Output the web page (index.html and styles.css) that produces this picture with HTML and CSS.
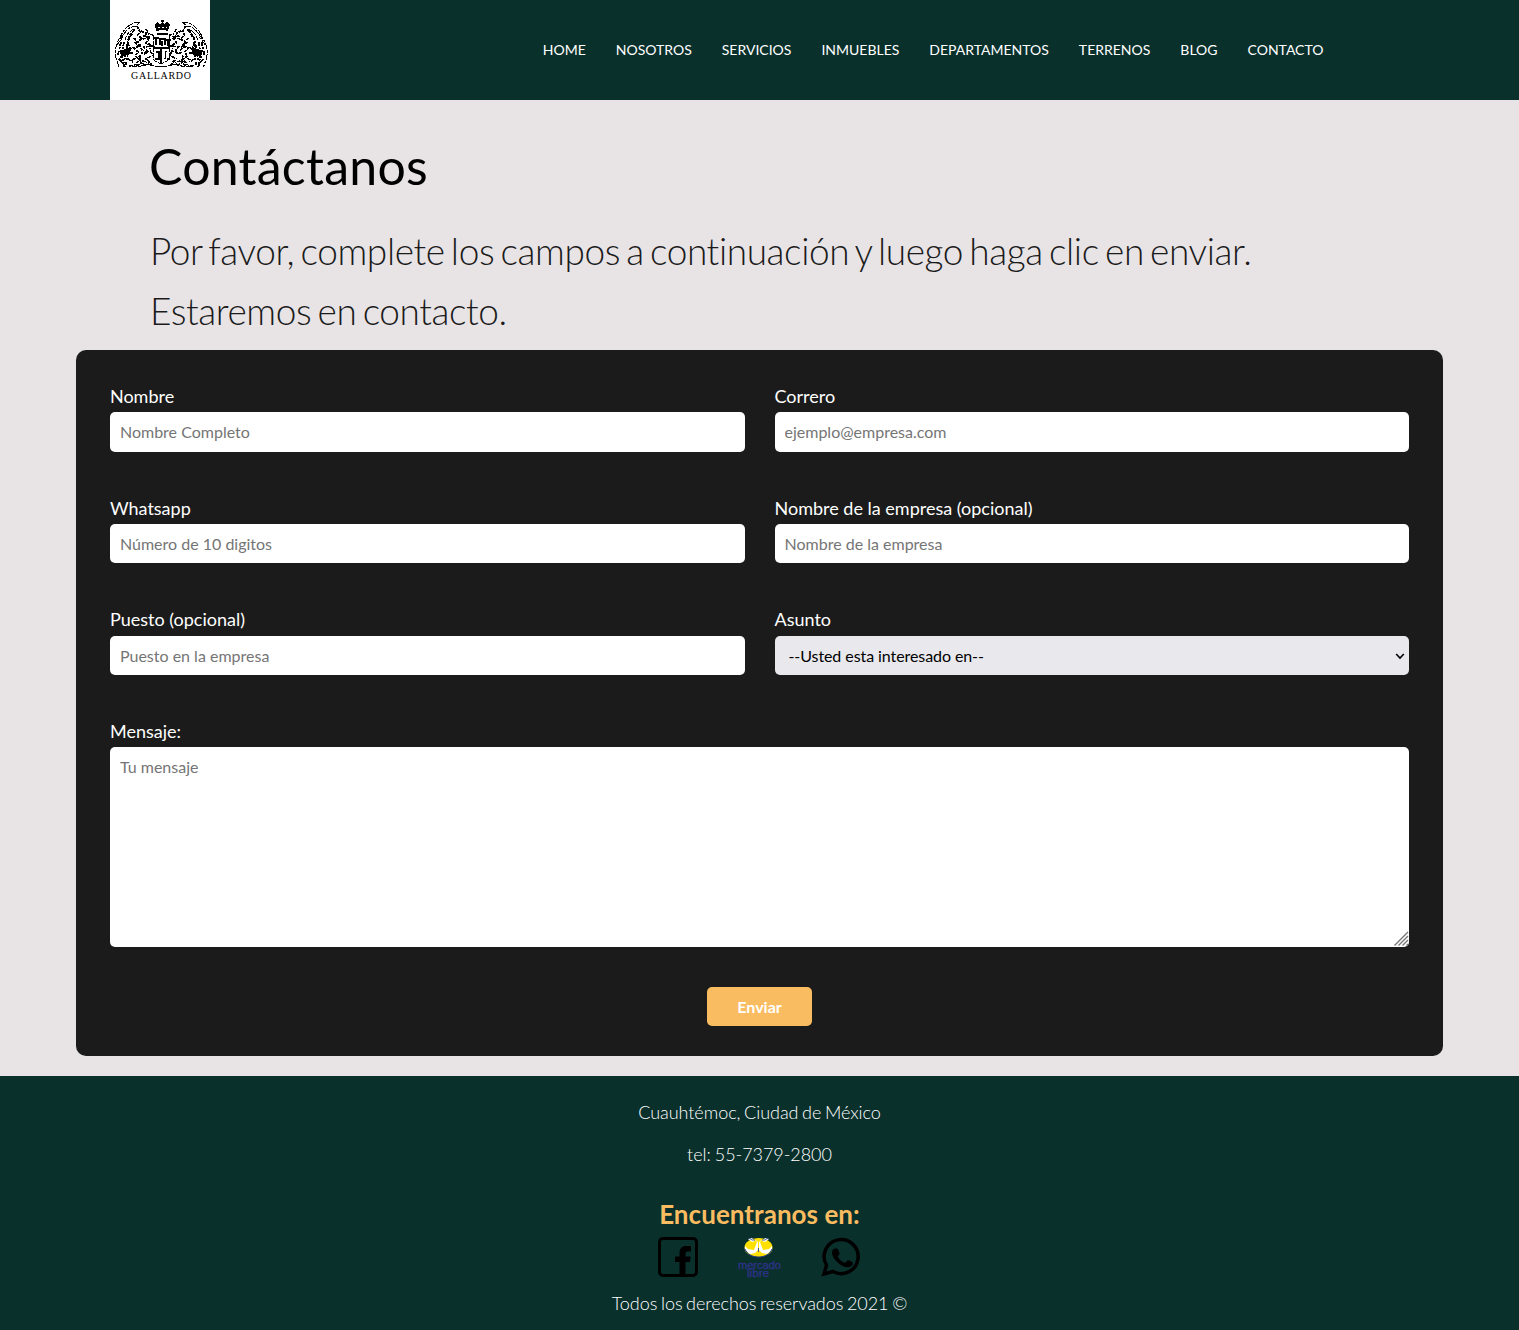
FILE: index.html
```html
<!DOCTYPE html>
<html lang="es">
<head>
<meta charset="utf-8">
<title>Contáctanos</title>
<link rel="stylesheet" href="styles.css">
</head>
<body>
<header class="header">
  <a class="logo" href="#" aria-label="Gallardo">
    <svg viewBox="0 0 100 100" width="100" height="100" shape-rendering="crispEdges">
      <defs>
        <g id="lion" fill="none" stroke="#000">
          <path d="M30 22c-9 0-17 7-20 16-5 7-6 17-3 23l2 6M30 22l-3 3M27 26c-6 0-10 3-13 8M25 29c-5 1-9 6-10 11M10 39l4-5M7 45l6-8" stroke-width="1" stroke-dasharray="6 1 3 1"/>
          <path d="M25 30c-6 4-8 10-8 20M22 34c-4 4-5 9-2 14M11 42l-3 13M14 42l-3 16M17 44l-3 19M12 54l2 13M18 53l-2 12M9 59l3 3" stroke-width="1.8" stroke-dasharray="4 1 2 2"/>
          <path d="M10 51l12-3-3 4 4 1-11 3z" fill="#000"/>
          <path d="M27 26l3 6-2 3 4 4-5 3 3 4-6 2 4 4-3 4 5 3-5 6M31 31l5 2 1 5-5 1M33 36l7 1-4 6 6 3-8 1 4 5-7 1M24 38l6 7M25 42l8 9" stroke-width="1.7" stroke-dasharray="3 1"/>
          <path d="M34 54l6-3 3 4-7 4 5 4M22 60l8-4 1 8M19 66l9-1 5-4 6 2M12 62l4 5M28 58l6 7 8-1M39 43l2 10M36 29l3 5 4 1M18 59l5 3" stroke-width="1.5" stroke-dasharray="4 1 1 1"/>
          <path d="M22 66h9l5-2 9 2 8 1M43 35v22q0 5 10 7" stroke-width="1" stroke-dasharray="5 1"/>
        </g>
      </defs>
      <use href="#lion"/>
      <use href="#lion" transform="translate(102.500 0) scale(-1 1)"/>
      <path d="M51 20h3v2h-3zM45 25l2-3 3 2 2-2 2 2 3-2 3 3-2 6H46zM47 33h11v2H47z"/>
      <path d="M48 27h2m2 0h2m2 0h1M49 30h7" stroke="#fff"/>
      <path d="M44 38h5M46 38v7M50 45v-6h5v6M52 41v5M58 39v7M56 40h5M44 48h16M51 48v15M56 51l-1 8M46 52h3v7h-4M57 59h3" fill="none" stroke="#000" stroke-width="1.3"/>
      <text class="logo-name" x="21" y="79" textLength="60">GALLARDO</text>
    </svg>
  </a>
  <nav class="nav">
    <a href="#">HOME</a><a href="#">NOSOTROS</a><a href="#">SERVICIOS</a><a href="#">INMUEBLES</a><a href="#">DEPARTAMENTOS</a><a href="#">TERRENOS</a><a href="#">BLOG</a><a href="#">CONTACTO</a>
  </nav>
</header>
<main>
  <section class="intro">
    <h1>Contáctanos</h1>
    <p>Por favor, complete los campos a continuación y luego haga clic en enviar. Estaremos en contacto.</p>
  </section>
  <form class="form">
    <label class="field"><span>Nombre</span><input type="text" placeholder="Nombre Completo"></label>
    <label class="field"><span>Correro</span><input type="email" placeholder="ejemplo@empresa.com"></label>
    <label class="field"><span>Whatsapp</span><input type="tel" placeholder="Número de 10 digitos"></label>
    <label class="field"><span>Nombre de la empresa (opcional)</span><input type="text" placeholder="Nombre de la empresa"></label>
    <label class="field"><span>Puesto (opcional)</span><input type="text" placeholder="Puesto en la empresa"></label>
    <label class="field"><span>Asunto</span>
      <span class="select-wrap">
        <select><option>--Usted esta interesado en--</option></select>
        <svg class="chevron" viewBox="0 0 10 8" width="10" height="8"><path d="M1.200 1 5 5 8.800 1" fill="none" stroke="#000" stroke-width="1.600"/></svg>
      </span>
    </label>
    <label class="field field-wide"><span>Mensaje:</span>
      <span class="message-wrap">
        <textarea placeholder="Tu mensaje"></textarea>
        <svg class="grip" viewBox="0 0 15 15" width="15" height="15"><path d="M.5 14.500 14 1M4.500 14.500 14 5M8.500 14.500 14 9M12.500 14.500 14 13" stroke="#777" stroke-width="1.400"/></svg>
      </span>
    </label>
    <button class="submit" type="button">Enviar</button>
  </form>
</main>
<footer class="footer">
  <p>Cuauhtémoc, Ciudad de México</p>
  <p class="phone">tel: 55-7379-2800</p>
  <h3>Encuentranos en:</h3>
  <div class="social">
    <a href="#" aria-label="Facebook"><svg viewBox="0 0 40 40" width="40" height="40"><rect x="1.500" y="1.500" width="37" height="37" rx="3.500" fill="none" stroke="#000" stroke-width="3"/><path d="M21.500 38V25H17v-5.500h4.500V16c0-4.500 2.500-7 7-7H33v5.500h-3c-2 0-2.500.8-2.500 2.500v2.500h5.200L32 25h-4.500v13z"/></svg></a>
    <a class="market" href="#" aria-label="Mercado Libre"><svg viewBox="0 0 46 44" width="46" height="44">
      <ellipse cx="21.500" cy="10.500" rx="14" ry="9.500" fill="#ffe000"/>
      <path d="M8 9l3 3 6 1 3-8-3-3 4 3v8l-3 3-5 1-5-4zM35 9l-3 3-6 1-3-8 3-3-4 3v8l3 3 5 1 5-4zM11 2l4-1 3 3-3 1zM32 2l-4-1-3 3 3 1z" fill="#fff"/>
      <path d="M12 1l3 2 3 0M31 1l-3 2-3 0M21.500 11v4" fill="none" stroke="#20398c" stroke-width=".8"/>
      <path d="M8 12c2 5 7 8 13.500 8S33 17 35 12" fill="none" stroke="#20398c" stroke-width="1"/>
      <text class="market-name" x="22.500" y="31.500" textLength="43" lengthAdjust="spacingAndGlyphs">mercado</text>
      <text class="market-name" x="21" y="40" textLength="22" lengthAdjust="spacingAndGlyphs">libre</text>
    </svg></a>
    <a href="#" aria-label="WhatsApp"><svg viewBox="0 0 40 40" width="40" height="40"><path d="M3 37 5.500 28.200A17 17 0 1 1 12 34.500z" fill="none" stroke="#000" stroke-width="3.500"/><path d="M14 11.500h1.800c.6 0 1 .3 1.200.9l1.500 3.600c.2.600.1 1-.3 1.500l-1.500 1.900c2.200 3.700 4.500 5.400 7.500 6.600l2-2.400c.4-.5.9-.6 1.500-.3l3.500 1.700c.7.300.8.700.7 1.500-.5 2.500-2.500 3.800-5 3.800C20 30.300 11 22 11 15.500c0-2 1.500-4 3-4z"/></svg></a>
  </div>
  <p class="copyright">Todos los derechos reservados 2021 ©</p>
</footer>
</body>
</html>
```
FILE: styles.css
```css
*, *::before, *::after { box-sizing: border-box; }
body { margin: 0; background: #e8e4e6; color: #000; font: 400 18px/1.8 Lato, sans-serif; }
h1, h3, p { margin: 0; }
a { color: inherit; text-decoration: none; }
svg { display: block; }
.header { height: 100px; padding: 0 195.5px 0 110px; display: flex; justify-content: space-between; align-items: center; background: #0a302c; }
.logo { background: #fff; }
.logo-name { font: 10px "Liberation Serif", serif; }
.nav { display: flex; gap: 30px; color: #fff; font-size: 14px; }
.intro { padding: 31px 150px 9px; }
h1 { margin-left: -1px; font-size: 50px; font-weight: 400; line-height: 70px; letter-spacing: .25px; }
.intro p { margin-top: 20px; max-width: 1219px; font-size: 37px; font-weight: 300; line-height: 60px; letter-spacing: -.4px; word-spacing: -3.4px; color: #1b1b1b; }
.form { width: 90%; margin: 0 auto 20px; padding: 30px 34px; display: grid; grid-template-columns: 1fr 1fr; gap: 40px 30px; background: #1b1b1b; border-radius: 10px; }
.field { display: flex; flex-direction: column; color: #fff; }
.field-wide { grid-column: 1 / -1; }
input, select, textarea { display: block; width: 100%; border: 0; border-radius: 5px; padding: 10px; font: 400 16px/19.2px Lato, sans-serif; background: #fff; color: #000; }
input, select { height: 39.2px; }
input::placeholder, textarea::placeholder { color: #757575; opacity: 1; }
select { appearance: none; background: #e9e9ed; padding-left: 14px; letter-spacing: -.08px; }
.select-wrap, .message-wrap { position: relative; display: block; }
.chevron { position: absolute; right: 4px; top: 17px; }
textarea { height: 200px; resize: none; }
.grip { position: absolute; right: 0; bottom: 1px; }
.submit { grid-column: 1 / -1; justify-self: center; width: 105px; height: 39.2px; padding: 0; border: 0; border-radius: 5px; background: #fabc60; color: #fff; font: 700 16px/19.2px Lato, sans-serif; }
.footer { height: 254px; padding-top: 15px; display: flex; flex-direction: column; align-items: center; background: #0a302c; color: #fff; font-weight: 300; line-height: 42px; letter-spacing: -.05px; word-spacing: -1.2px; }
.phone { word-spacing: -.8px; }
.footer h3 { margin-top: 19px; color: #fabc60; font-size: 26px; font-weight: 700; line-height: 41px; letter-spacing: .05px; word-spacing: 0; }
.social { display: flex; gap: 38px; padding-top: 2px; }
.market { margin-left: 1px; }
.market-name { font: 10px "Liberation Sans", sans-serif; letter-spacing: 0; fill: #2d3287; stroke: #2d3287; stroke-width: .3; text-anchor: middle; }
.copyright { margin-top: 1px; }
```
